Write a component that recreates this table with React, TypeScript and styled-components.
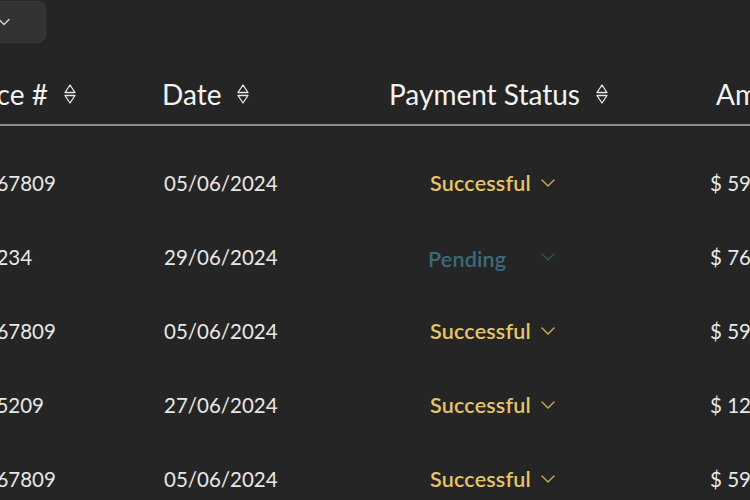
import { createGlobalStyle, styled } from "styled-components";

const GlobalStyle = createGlobalStyle`
  html, body {
    margin: 0;
    padding: 0;
    background: #252525;
    overflow: hidden;
  }
  body {
    font-family: "Lato", "Open Sans", sans-serif;
    color: #ececec;
  }
`;

interface payment {
  invoice: string;
  date: string;
  status: "Successful" | "Pending";
  amount: string;
}

const rows: payment[] = [
  { invoice: "1234567809", date: "05/06/2024", status: "Successful", amount: "$ 59,000.00" },
  { invoice: "12341234", date: "29/06/2024", status: "Pending", amount: "$ 76,500.00" },
  { invoice: "1234567809", date: "05/06/2024", status: "Successful", amount: "$ 59,000.00" },
  { invoice: "123455209", date: "27/06/2024", status: "Successful", amount: "$ 12,400.00" },
  { invoice: "1234567809", date: "05/06/2024", status: "Successful", amount: "$ 59,000.00" },
];

const STATUS_COLOR = {
  Successful: "#e6c468",
  Pending: "#3b6b79",
};

const Page = styled.div`
  width: 750px;
  height: 500px;
  overflow: hidden;
`;

const TopBar = styled.div`
  display: flex;
  padding-top: 1px;
  height: 42px;
`;

const FilterButton = styled.button`
  display: flex;
  align-items: center;
  justify-content: flex-end;
  width: 120px;
  height: 42px;
  margin-left: -74px;
  padding: 0 35px 0 0;
  background: #333333;
  border: 1px solid #3b3b3b;
  border-radius: 8px;
  color: #dcdcdc;
`;

const Table = styled.div`
  display: grid;
  grid-template-columns: 228px 227px 327px 400px;
  width: 1182px;
  margin-left: -66px;
  margin-top: 21px;
`;

const HeaderCell = styled.div<{ $shift?: number }>`
  display: flex;
  align-items: center;
  gap: 16px;
  height: 60px;
  font-size: 28px;
  color: #f2f2f2;
  white-space: nowrap;
  margin-left: ${(p) => p.$shift ?? 0}px;
`;

const Divider = styled.div`
  grid-column: 1 / -1;
  height: 2px;
  background: #8e8e8e;
  margin-bottom: 20px;
`;

const Cell = styled.div<{ $shift?: number }>`
  display: flex;
  align-items: center;
  height: 74px;
  font-size: 20.5px;
  color: #e8e8e8;
  white-space: nowrap;
  margin-left: ${(p) => p.$shift ?? 2}px;
`;

const StatusSelect = styled.div<{ $color: string }>`
  display: flex;
  align-items: center;
  justify-content: space-between;
  width: 125px;
  margin-left: 41px;
  color: ${(p) => p.$color};
  font-size: 21.5px;
`;

const StatusText = styled.span<{ $pending?: boolean }>`
  margin-left: ${(p) => (p.$pending ? -2 : 0)}px;
  padding-top: ${(p) => (p.$pending ? 3 : 0)}px;
  font-weight: 600;
  letter-spacing: 0.2px;
`;

const SortIcon = () => (
  <svg width="12" height="22" viewBox="0 0 12 22" fill="none" stroke="#e6e6e6" strokeWidth="1.3">
    <path d="M6 2 L11 9.5 H1 Z" strokeLinejoin="round" />
    <path d="M6 20 L11 12.5 H1 Z" strokeLinejoin="round" />
  </svg>
);

const Chevron = ({ color }: { color: string }) => (
  <svg width="14" height="8" viewBox="0 0 14 8" fill="none" stroke={color} strokeWidth="1.4">
    <path d="M1 1 L7 7 L13 1" strokeLinecap="round" strokeLinejoin="round" />
  </svg>
);

const App = (): JSX.Element => {
  const headers = ["Invoice #", "Date", "Payment Status", "Amount"];
  return (
    <Page>
      <GlobalStyle />
      <TopBar>
        <FilterButton>
          <svg width="12" height="8" viewBox="0 0 12 8" fill="none" stroke="#d8d8d8" strokeWidth="1.3">
            <path d="M1 1.5 L6 6.5 L11 1.5" strokeLinecap="round" />
          </svg>
        </FilterButton>
      </TopBar>
      <Table>
        {headers.map((h, idx) => (
          <HeaderCell key={h} $shift={idx === 0 ? 3 : 0}>
            {h}
            {h !== "Amount" && <SortIcon />}
          </HeaderCell>
        ))}
        <Divider />
        {rows.map((el, idx) => (
          <>
            <Cell key={`i${idx}`} $shift={3}>{el.invoice}</Cell>
            <Cell key={`d${idx}`}>{el.date}</Cell>
            <Cell key={`s${idx}`} $shift={0}>
              <StatusSelect $color={STATUS_COLOR[el.status]}>
                <StatusText $pending={el.status === "Pending"}>{el.status}</StatusText>
                <Chevron color={el.status === "Pending" ? "#2f5560" : "#c9ad60"} />
              </StatusSelect>
            </Cell>
            <Cell key={`a${idx}`} $shift={-6}>{el.amount}</Cell>
          </>
        ))}
      </Table>
    </Page>
  );
};

export default App;
